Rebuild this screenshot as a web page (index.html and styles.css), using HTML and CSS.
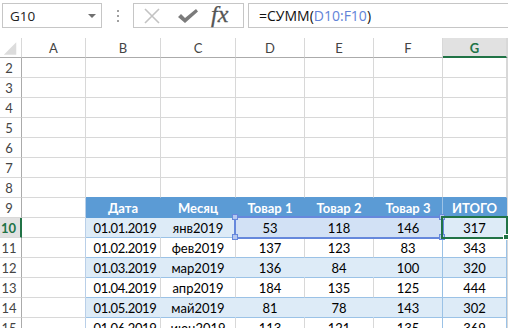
FILE: index.html
```html
<!DOCTYPE html>
<html>
<head>
<meta charset="utf-8">
<link rel="stylesheet" href="styles.css">
</head>
<body>
<div class="toolbar">
  <div class="namebox"><span class="nb-text">G10</span><span class="nb-arrow"></span></div>
  <div class="dots"><i></i><i></i><i></i></div>
  <div class="fbtns">
    <svg class="ic-x" width="18" height="18" viewBox="0 0 18 18"><path d="M2 2 L16 16 M16 2 L2 16" stroke="#c3c3c3" stroke-width="1.6" fill="none"/></svg>
    <svg class="ic-ok" width="22" height="18" viewBox="0 0 22 18"><path d="M1 10 L4 7 L8 11 L19 2 L21 4.5 L8 16 Z" fill="#7b7b7b"/></svg>
    <span class="fx">fx</span>
  </div>
  <div class="formula">=СУММ(<span class="ref">D10:F10</span>)</div>
</div>
<div class="sheet">
  <div class="c ch corner"><svg width="22" height="20" viewBox="0 0 22 20"><path d="M4 17 L17 17 L17 4 Z" fill="#dcdcdc"/></svg></div>
  <div class="c ch">A</div><div class="c ch">B</div><div class="c ch">C</div><div class="c ch">D</div><div class="c ch">E</div><div class="c ch">F</div><div class="c ch act">G</div><div class="c ch"></div>

  <div class="c rh">2</div><div class="c"></div><div class="c"></div><div class="c"></div><div class="c"></div><div class="c"></div><div class="c"></div><div class="c"></div><div class="c"></div>
  <div class="c rh">3</div><div class="c"></div><div class="c"></div><div class="c"></div><div class="c"></div><div class="c"></div><div class="c"></div><div class="c"></div><div class="c"></div>
  <div class="c rh">4</div><div class="c"></div><div class="c"></div><div class="c"></div><div class="c"></div><div class="c"></div><div class="c"></div><div class="c"></div><div class="c"></div>
  <div class="c rh">5</div><div class="c"></div><div class="c"></div><div class="c"></div><div class="c"></div><div class="c"></div><div class="c"></div><div class="c"></div><div class="c"></div>
  <div class="c rh">6</div><div class="c"></div><div class="c"></div><div class="c"></div><div class="c"></div><div class="c"></div><div class="c"></div><div class="c"></div><div class="c"></div>
  <div class="c rh">7</div><div class="c"></div><div class="c"></div><div class="c"></div><div class="c"></div><div class="c"></div><div class="c"></div><div class="c"></div><div class="c"></div>
  <div class="c rh">8</div><div class="c"></div><div class="c above"></div><div class="c above"></div><div class="c above"></div><div class="c above"></div><div class="c above"></div><div class="c above"></div><div class="c"></div>

  <div class="c rh">9</div><div class="c edge"></div><div class="c th">Дата</div><div class="c th">Месяц</div><div class="c th">Товар 1</div><div class="c th">Товар 2</div><div class="c th th-f">Товар 3</div><div class="c th th-g">ИТОГО</div><div class="c"></div>

  <div class="c rh act">10</div><div class="c edge"></div><div class="c tb band d">01.01.2019</div><div class="c tb band">янв2019</div><div class="c tb band sel">53</div><div class="c tb band sel">118</div><div class="c tb band sel tf">146</div><div class="c tb band tg">317</div><div class="c"></div>
  <div class="c rh">11</div><div class="c edge"></div><div class="c tb d">01.02.2019</div><div class="c tb">фев2019</div><div class="c tb">137</div><div class="c tb">123</div><div class="c tb tf">83</div><div class="c tb tg">343</div><div class="c"></div>
  <div class="c rh">12</div><div class="c edge"></div><div class="c tb band d">01.03.2019</div><div class="c tb band">мар2019</div><div class="c tb band">136</div><div class="c tb band">84</div><div class="c tb band tf">100</div><div class="c tb band tg">320</div><div class="c"></div>
  <div class="c rh">13</div><div class="c edge"></div><div class="c tb d">01.04.2019</div><div class="c tb">апр2019</div><div class="c tb">184</div><div class="c tb">135</div><div class="c tb tf">125</div><div class="c tb tg">444</div><div class="c"></div>
  <div class="c rh">14</div><div class="c edge"></div><div class="c tb band d">01.05.2019</div><div class="c tb band">май2019</div><div class="c tb band">81</div><div class="c tb band">78</div><div class="c tb band tf">143</div><div class="c tb band tg">302</div><div class="c"></div>
  <div class="c rh">15</div><div class="c edge"></div><div class="c tb d">01.06.2019</div><div class="c tb">июн2019</div><div class="c tb">113</div><div class="c tb">121</div><div class="c tb tf">135</div><div class="c tb tg">369</div><div class="c"></div>

  <div class="refbox"></div>
  <div class="hdl h1"></div><div class="hdl h2"></div><div class="hdl h3"></div><div class="hdl h4"></div>
  <div class="active"></div>
  <div class="fill"></div>
</div>
</body>
</html>
```
FILE: styles.css
```css
* { box-sizing: border-box; }
html, body { margin: 0; padding: 0; background: #fff; }
body {
  width: 508px;
  height: 328px;
  overflow: hidden;
  font-family: Lato, "Open Sans", sans-serif;
  color: #000;
}

.toolbar {
  height: 38px;
  display: flex;
  align-items: flex-start;
  padding-top: 3px;
}
.namebox {
  margin-left: 2px;
  width: 100px;
  height: 25px;
  border: 1px solid #c6c6c6;
  display: flex;
  align-items: center;
  justify-content: space-between;
  padding: 0 5px 0 7px;
  font-family: "Open Sans", sans-serif;
  font-size: 13.5px;
  color: #222;
}
.nb-arrow {
  width: 0; height: 0;
  border-left: 4px solid transparent;
  border-right: 4px solid transparent;
  border-top: 4px solid #707070;
  margin-top: 1px;
}
.dots {
  width: 31px;
  height: 25px;
  display: flex;
  flex-direction: column;
  align-items: center;
  justify-content: center;
  gap: 3px;
}
.dots i {
  display: block;
  width: 2px; height: 2px;
  background: #a0a0a0;
}
.fbtns {
  width: 111px;
  height: 25px;
  border: 1px solid #c6c6c6;
  display: flex;
  align-items: center;
  padding-left: 9px;
}
.ic-x { margin-right: 16px; }
.ic-ok { margin-right: 12px; }
.fx {
  font-family: "Liberation Serif", serif;
  font-style: italic;
  font-size: 24px;
  color: #555;
  line-height: 1;
  margin-top: -3px;
  -webkit-text-stroke: 0.3px #555;
}
.formula {
  margin-left: 4px;
  flex: 1;
  height: 25px;
  border: 1px solid #c6c6c6;
  border-right: none;
  display: flex;
  align-items: center;
  padding-left: 10px;
  font-family: "Open Sans", sans-serif;
  font-size: 14px;
  color: #111;
}
.ref { color: #6283d8; }

.sheet {
  position: relative;
  display: grid;
  grid-template-columns: 22px 64px 75px 75px 69px 69px 69px 64px 1fr;
  grid-auto-rows: 20px;
}
.c {
  border-right: 1px solid #d8d8d8;
  border-bottom: 1px solid #d8d8d8;
  display: flex;
  align-items: center;
  justify-content: center;
  white-space: nowrap;
  overflow: hidden;
  font-size: 13px;
  padding-top: 1px;
}
.d { letter-spacing: -0.35px; padding-left: 4px; }
.ch {
  color: #444;
  font-size: 13px;
  border-bottom-color: #ababab;
}
.ch.corner { padding: 0; align-items: stretch; }
.ch.act {
  background: #e1e1e1;
  color: #217346;
  font-weight: bold;
  border-bottom: 2px solid #217346;
  padding-top: 2px;
}
.rh {
  color: #444;
  font-size: 13px;
  border-right-color: #ababab;
  padding-right: 3px;
}
.rh.act {
  background: #e1e1e1;
  color: #217346;
  font-weight: bold;
  border-right: 2px solid #217346;
}
.above { border-bottom-color: #5b9bd5; }
.edge { border-right-color: #b9cfe8; }
.th {
  background: #5b9bd5;
  color: #fff;
  font-weight: bold;
  border-right-color: #5b9bd5;
  border-bottom-color: #5b9bd5;
}
.th-f { border-right-color: #9dc3e6; }
.th-g { border-right-color: #5b9bd5; }
.tb {
  border-bottom-color: #9bc2e6;
}
.tb.band {
  background: #ddebf7;
  border-right-color: #ddebf7;
}
.tb.sel {
  background: #d2e1f5;
  border-right-color: #d2e1f5;
}
.tb.tf { border-right-color: #9bc2e6; }
.tb.tg { border-right-color: #9bc2e6; }

.refbox {
  position: absolute;
  left: 234px;
  top: 178px;
  width: 210px;
  height: 23px;
  border: 2px solid #6688dc;
}
.hdl {
  position: absolute;
  width: 6px;
  height: 6px;
  background: #b4c7f0;
  border: 1px solid #6688dc;
}
.h1 { left: 232px; top: 176px; }
.h2 { left: 232px; top: 196px; }
.h3 { left: 439px; top: 176px; }
.h4 { left: 439px; top: 196px; }
.active {
  position: absolute;
  left: 441px;
  top: 178px;
  width: 67px;
  height: 23px;
  border: 2px solid #217346;
}
.fill {
  position: absolute;
  left: 503px;
  top: 196px;
  width: 6px;
  height: 6px;
  background: #217346;
  border: 1px solid #fff;
}
```
